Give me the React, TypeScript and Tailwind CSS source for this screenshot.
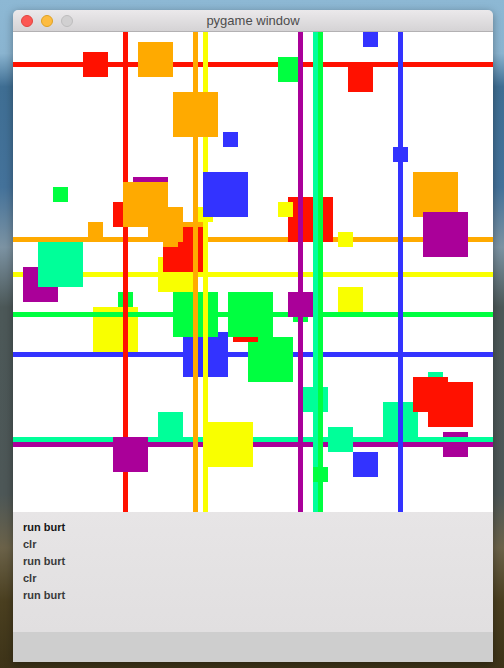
import React from 'react';

type Box = [number, number, number, number, string];

const R = '#ff1100';
const O = '#ffaa00';
const Y = '#f9ff00';
const G = '#00ff40';
const T = '#00ff99';
const B = '#3333ff';
const P = '#aa0099';

// drawn before the horizontal lines
const bottomLayer: Box[] = [
  [80, 275, 45, 45, Y],
  [430, 400, 25, 25, P],
];

const hLines: Box[] = [
  [0, 30, 480, 5, R],
  [0, 205, 480, 5, O],
  [0, 240, 480, 5, Y],
  [0, 280, 480, 5, G],
  [0, 320, 480, 5, B],
  [0, 405, 480, 5, T],
  [0, 410, 480, 5, P],
];

// between horizontal and vertical lines
const midLayer: Box[] = [
  [70, 20, 25, 25, R],
  [125, 10, 35, 35, O],
  [210, 100, 15, 15, B],
  [265, 25, 25, 25, G],
  [335, 35, 25, 25, R],
  [350, 0, 15, 15, B],
  [380, 115, 15, 15, B],
  [120, 145, 35, 35, P],
  [100, 170, 25, 25, R],
  [40, 155, 15, 15, G],
  [75, 190, 15, 15, O],
  [165, 190, 25, 25, O],
  [145, 225, 35, 35, Y],
  [150, 195, 40, 45, R],
  [135, 175, 35, 35, O],
  [150, 200, 15, 15, O],
  [185, 175, 15, 15, Y],
  [10, 235, 35, 35, P],
  [25, 210, 45, 45, T],
  [105, 260, 15, 15, G],
  [170, 300, 45, 45, B],
  [160, 260, 45, 45, G],
  [235, 305, 45, 45, G],
  [220, 285, 25, 25, R],
  [215, 260, 45, 45, G],
  [275, 165, 45, 45, R],
  [265, 170, 15, 15, Y],
  [325, 200, 15, 15, Y],
  [400, 140, 45, 45, O],
  [410, 180, 45, 45, P],
  [325, 255, 25, 25, Y],
  [280, 275, 15, 15, G],
  [275, 260, 25, 25, P],
  [290, 355, 25, 25, T],
  [370, 370, 35, 35, T],
  [415, 340, 15, 15, T],
  [400, 345, 35, 35, R],
  [415, 350, 45, 45, R],
  [145, 380, 25, 25, T],
  [340, 420, 25, 25, B],
];

const vLines: Box[] = [
  [110, 0, 5, 480, R],
  [180, 0, 5, 480, O],
  [190, 0, 5, 480, Y],
  [285, 0, 5, 480, P],
  [300, 0, 5, 480, T],
  [305, 0, 5, 480, G],
  [385, 0, 5, 480, B],
];

const topLayer: Box[] = [
  [160, 60, 45, 45, O],
  [110, 150, 45, 45, O],
  [190, 140, 45, 45, B],
  [100, 405, 35, 35, P],
  [190, 390, 50, 45, Y],
  [315, 395, 25, 25, T],
  [300, 435, 15, 15, G],
];

const layers = [bottomLayer, hLines, midLayer, vLines, topLayer];

const Canvas: React.FC = () => (
  <svg width={480} height={480} viewBox="0 0 480 480" shapeRendering="crispEdges" className="block bg-white">
    {layers.flat().map(([x, y, w, h, c], i) => (
      <rect key={i} x={x} y={y} width={w} height={h} fill={c} />
    ))}
  </svg>
);

const log = ['run burt', 'clr', 'run burt', 'clr', 'run burt'];

export default function App() {
  return (
    <div className="w-[504px] h-[668px] overflow-hidden pt-[10px] pl-[13px] bg-[linear-gradient(180deg,#8db8d4_0%,#8ab4d0_8%,#3f6e93_13%,#44729a_28%,#7c93a3_37%,#4c5858_46%,#4d5757_74%,#6b6249_82%,#4a3f20_90%,#3d3318_100%)]">
      <div className="w-[480px] rounded-t-[5px] overflow-hidden shadow-[0_2px_8px_rgba(0,0,0,0.35)] font-['Liberation_Sans',Arial,sans-serif]">
        <div className="relative h-[22px] flex items-center border-b border-[#b3b1b3] bg-[linear-gradient(180deg,#ebe9eb,#d5d3d5)]">
          <div className="flex items-center gap-[8px] pl-[8px]">
            <span className="w-[12px] h-[12px] rounded-full bg-[#fc5753] border border-[#e0443e]"></span>
            <span className="w-[12px] h-[12px] rounded-full bg-[#fdbc40] border border-[#dea123]"></span>
            <span className="w-[12px] h-[12px] rounded-full bg-[#d1d0d1] border border-[#bdbcbd]"></span>
          </div>
          <div className="absolute inset-0 flex items-center justify-center text-[13px] text-[#4d4d4d] pointer-events-none">
            pygame window
          </div>
        </div>
        <Canvas />
        <div className="h-[120px] pt-[7px] pl-[10px] bg-[linear-gradient(180deg,#e7e5e6,#e1dfe0)] text-[11px] font-bold leading-[17px]">
          {log.map((line, i) => (
            <div key={i} className={i === 0 ? 'text-[#161616]' : 'text-[#3a3a3a]'}>
              {line}
            </div>
          ))}
        </div>
        <div className="h-[30px] bg-[#cecece]"></div>
      </div>
    </div>
  );
}
